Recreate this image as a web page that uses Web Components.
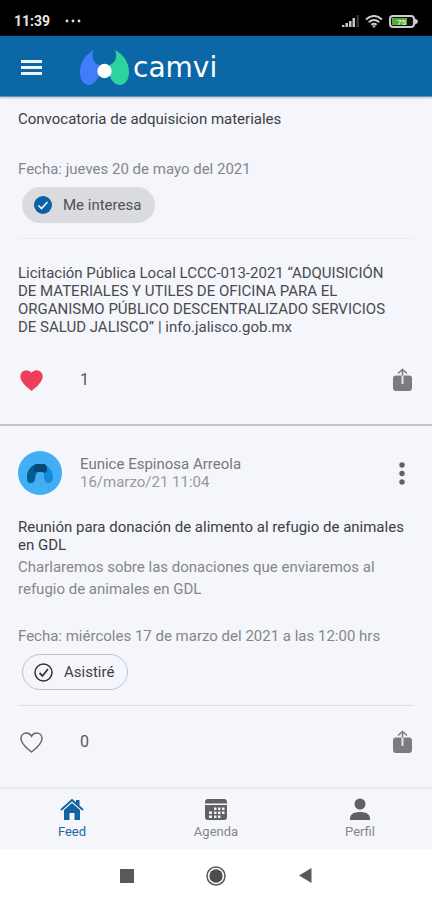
<!DOCTYPE html>
<html lang="es">
<head>
<meta charset="utf-8">
<meta name="viewport" content="width=device-width, initial-scale=1">
<title>camvi</title>
<style>
html{height:100%}
body{margin:0;min-height:100%;display:flex;flex-direction:column;background:#f4f6fb;font-family:Roboto,"Liberation Sans",sans-serif;font-size:15px;line-height:18px;color:#4a4b4f}
camvi-app{flex:1}
</style>
</head>
<body>
<camvi-app></camvi-app>
<script>
const define = (name, html) => {
  const template = document.createElement('template');
  template.innerHTML = '<style>*{box-sizing:border-box}button{font:inherit;color:inherit;background:none;border:0;padding:0;margin:0;display:flex;align-items:center;cursor:pointer}svg{display:block;flex:none}p,h1,h2{margin:0;font:inherit}</style>' + html;
  customElements.define(name, class extends HTMLElement {
    constructor() {
      super();
      this.attachShadow({mode: 'open'}).append(template.content.cloneNode(true));
    }
  });
};

define('status-bar', `
<style>
:host{box-sizing:border-box;display:flex;justify-content:space-between;align-items:center;height:36px;padding:6px 14px 0;background:#000;color:#e6e6e6;font-size:14px;font-weight:700}
div{display:flex;align-items:center;gap:6px}
.left{gap:15px}
</style>
<div class="left"><span>11:39</span>
<svg width="16" height="4" fill="#ddd"><circle cx="2" cy="2" r="1.4"/><circle cx="8" cy="2" r="1.4"/><circle cx="14" cy="2" r="1.4"/></svg></div>
<div>
<svg width="17" height="12" fill="#c8c8c8"><path d="M0 10h2.500v2H0zM3.500 8H6v4H3.500zM7 6h2.500v6H7zM10.500 3H13v9h-2.500z"/><path d="M14.500 0H17v12h-2.500z" fill="#333"/></svg>
<svg width="18" height="13" viewBox="0 0 18 13" fill="none" stroke="#ccc" stroke-width="2"><path d="M1 4.500Q9-2.500 17 4.500M3.700 7.200Q9 2.800 14.300 7.200M6.300 9.800Q9 7.600 11.700 9.800"/><path d="M7 10.500h4L9 13z" fill="#ccc" stroke="none"/></svg>
<svg width="29" height="13" viewBox="0 0 29 13"><rect x="1" y="1" width="24" height="11" rx="3" fill="#111" stroke="#ccc" stroke-width="2"/><path d="M26 3.500q3 1 3 3t-3 3z" fill="#ccc"/><path d="M3 3h15v7H3z" fill="#4fae2c"/><text x="8" y="9.500" font-size="8" font-family="Roboto" font-weight="700" fill="#d8f0cc">75</text></svg>
</div>`);

define('app-header', `
<style>
:host{box-sizing:border-box;display:flex;align-items:center;gap:38px;min-height:61px;padding:3px 21px 0;background:#0b67a5;border-bottom:1px solid #5f96bf;box-shadow:0 1px 2px #b9bcc6;color:#fff}
h1{display:flex;align-items:center;gap:4px;font:28px/36px "DejaVu Sans",sans-serif}
</style>
<button aria-label="Menú"><svg width="21" height="15" fill="#eef5fa"><path d="M0 0h21v3H0zM0 6h21v3H0zM0 12h21v3H0z"/></svg></button>
<h1><svg width="49" height="37" viewBox="0 0 49 37"><path d="M14 1C6 5 0 13 0 23C0 31 4 36 9 36C14 36 17 30 19 27L22 17C14 15 10 8 14 1Z" fill="#3f7dfb"/><path d="M35 1C43 5 49 13 49 23C49 31 45 36 40 36C34 36 31 30 29 26L27 17C35 15 38 9 35 1Z" fill="#2dd39d"/><circle cx="24.500" cy="22" r="7.200" fill="#fff"/></svg><span>camvi</span></h1>`);

define('interest-chip', `
<style>
:host{display:flex;padding:0 4px}
button{height:36px;padding:0 13px 0 11px;gap:11px;border:1px solid #c3c4c9;border-radius:18px;color:#3f4043}
:host([active]) button{background:#dadbde;border-color:#dadbde;color:#505155}
.on,:host([active]) .off{display:none}
:host([active]) .on{display:block}
</style>
<button><svg class="on" width="18" height="18" viewBox="0 0 18 18"><circle cx="9" cy="9" r="9" fill="#0b62a3"/><path d="M4.500 9.500l3 3 6-6.500" fill="none" stroke="#eef3f8" stroke-width="1.700"/></svg>
<svg class="off" width="19" height="19" viewBox="0 0 19 19" fill="none" stroke="#333438"><circle cx="9.500" cy="9.500" r="8.500" stroke-width="1.500"/><path d="M5.500 10l3 3L14 6" stroke-width="1.800"/></svg>
<span><slot></slot></span></button>`);

define('post-actions', `
<style>
:host{display:flex;align-items:center;color:#55565a;height:40px;padding:0 2px;font-size:16px}
.like{gap:37px}
.share{margin-left:auto}
.heart{fill:none;stroke:#66676b;stroke-width:1.5}
:host([liked]) .heart{fill:#ef3e5b;stroke:#ef3e5b}
</style>
<button class="like" aria-label="Me gusta"><svg class="heart" width="23" height="21" viewBox="0 0 23 21"><path d="M11.500 20C8 17 1 12.500 1 6.500C1 3 3.500 1 6.300 1C8.700 1 10.500 2.200 11.500 4.200C12.500 2.200 14.300 1 16.700 1C19.500 1 22 3 22 6.500C22 12.500 15 17 11.500 20Z"/></svg><span><slot></slot></span></button>
<button class="share" aria-label="Compartir"><svg width="19" height="24" viewBox="0 0 19 24"><path d="M3 7.500h13a3 3 0 0 1 3 3V20a3 3 0 0 1-3 3H3a3 3 0 0 1-3-3V10.500a3 3 0 0 1 3-3z" fill="#7b7c80"/><path d="M9.500 7v9" stroke="#e5e6ea" stroke-width="2"/><path d="M9.500 7.500V1.500M5 5.500l4.500-4 4.500 4" fill="none" stroke="#7b7c80" stroke-width="1.600"/></svg></button>`);

define('post-author', `
<style>
:host{display:flex;align-items:center;gap:18px;height:44px;color:#98999d}
h2{color:#77787c}
button{margin-left:auto;padding:0 9px}
</style>
<svg width="44" height="44" viewBox="0 0 44 44"><circle cx="22" cy="22" r="22" fill="#40aff3"/><path d="M22 13C29 13 35 19 35 26C35 30 33 32 30 32C27 32 27 29 26 27V23C25 20 19 20 18 23L17 27C17 29 16 32 13 32C10 32 9 30 9 26C9 19 15 13 22 13Z" fill="#128bdb"/><path d="M20 13H26Q29 14 29 19Q29 22 26 22C24 20 19 20 18 23L17 27C17 29 16 32 13 32C10 32 9 30 9 26C9 19 14 13 20 13Z" fill="#075a90"/><path d="M18 13H26Q29 14 29 18Q28 21 25 21H19Q16 21 16 18Q16 14 18 13Z" fill="#064875"/></svg>
<div><h2><slot name="name"></slot></h2><p><slot></slot></p></div>
<button aria-label="Opciones"><svg width="6" height="23" fill="#606165"><circle cx="3" cy="3" r="2.700"/><circle cx="3" cy="11.500" r="2.700"/><circle cx="3" cy="20" r="2.700"/></svg></button>`);

define('feed-post', `
<style>
:host{display:block;padding:0 18px}
.title{color:#3d3e42}
.body,.date{line-height:22px;color:#85868a}
.body{padding-top:2px}
.date{padding-bottom:7px}
.rule{border:0;border-top:1px solid #dcdfe4;margin:15px 0 0}
:host([quiet]) .rule{border-color:#e8ebef}
</style>
<slot name="author"></slot>
<p class="title"><slot name="title"></slot></p>
<p class="body"><slot name="body"></slot></p>
<p class="date"><slot name="date"></slot></p>
<slot name="chip"></slot>
<hr class="rule">
<slot></slot>`);

define('tab-bar', `
<style>
:host{display:block;border-top:2px solid #e9ebef;background:#f5f6fa}
nav{display:grid;grid-template-columns:repeat(3,1fr)}
a{display:flex;flex-direction:column;align-items:center;padding:9px 0 8px;gap:2px;font-size:13px;line-height:18px;color:#85868a;text-decoration:none}
a[aria-current]{color:#1969a8}
</style>
<nav>
<a href="#feed" aria-current="page"><svg width="24" height="23" viewBox="0 0 24 23"><path d="M16 2h3.500v6L16 5z" fill="#1263a2"/><path d="M1 12L12 2l11 10" fill="none" stroke="#1263a2" stroke-width="2"/><path d="M4 12l8-7 8 7v10h-5.500v-7h-5v7H4z" fill="#1263a2"/></svg>Feed</a>
<a href="#agenda"><svg width="24" height="23" viewBox="0 0 24 23"><path d="M4 1h16a3 3 0 0 1 3 3v1.500H1V4a3 3 0 0 1 3-3zM1 7h22v12a3 3 0 0 1-3 3H4a3 3 0 0 1-3-3z" fill="#606165"/><g fill="#f0f1f4"><path d="M10 9.500h2.500V12H10zM14 9.500h2.500V12H14zM18 9.500h2.500V12H18zM5 13.500h3V16H5zM10 13.500h2.500V16H10zM14 13.500h2.500V16H14zM18 13.500h2.500V16H18zM5 17.500h3V20H5zM10 17.500h2.500V20H10zM14 17.500h2.500V20H14z"/></g></svg>Agenda</a>
<a href="#perfil"><svg width="20" height="23" viewBox="0 0 20 23" fill="#606165"><circle cx="10" cy="6" r="5.500"/><path d="M0 22v-1.500C0 16 4.500 14 10 14s10 2 10 6.500V22z"/></svg>Perfil</a>
</nav>`);

define('system-nav', `
<style>
:host{box-sizing:border-box;display:flex;justify-content:center;align-items:center;gap:72px;height:51px;padding:2px 0 0;background:#fff}
</style>
<button aria-label="Recientes"><svg width="14" height="14"><path d="M0 0h14v14H0z" fill="#58595b"/></svg></button>
<button aria-label="Inicio"><svg width="20" height="20"><circle cx="10" cy="10" r="9" fill="none" stroke="#58595b" stroke-width="1.500"/><circle cx="10" cy="10" r="6.700" fill="#4c4d4f"/></svg></button>
<button aria-label="Atrás"><svg width="14" height="15"><path d="M13.500 0v15L1 7.500z" fill="#58595b"/></svg></button>`);

define('camvi-app', `
<style>
:host{display:flex;flex-direction:column}
main{flex:1;padding:13px 0 24px}
app-header{position:relative}
.empty{display:block;height:28px}
.link{padding:25px 16px 24px 0}
.split{border:0;border-top:2px solid #c3c5ca;margin:24px 0 25px}
.author{margin-bottom:23px}
.text{display:block;padding-bottom:25px}
.late{margin-top:16px}
</style>
<status-bar></status-bar>
<app-header></app-header>
<main>
<feed-post quiet>
<span slot="title">Convocatoria de adquisicion materiales</span>
<span slot="body" class="empty"></span>
<span slot="date">Fecha: jueves 20 de mayo del 2021</span>
<interest-chip slot="chip" active>Me interesa</interest-chip>
<p class="link">Licitación Pública Local LCCC-013-2021 “ADQUISICIÓN DE MATERIALES Y UTILES DE OFICINA PARA EL ORGANISMO PÚBLICO DESCENTRALIZADO SERVICIOS DE SALUD JALISCO” | info.jalisco.gob.mx</p>
<post-actions liked>1</post-actions>
</feed-post>
<hr class="split">
<feed-post>
<post-author slot="author" class="author"><span slot="name">Eunice Espinosa Arreola</span>16/marzo/21 11:04</post-author>
<span slot="title">Reunión para donación de alimento al refugio de animales en GDL</span>
<span slot="body" class="text">Charlaremos sobre las donaciones que enviaremos al refugio de animales en GDL</span>
<span slot="date">Fecha: miércoles 17 de marzo del 2021 a las 12:00 hrs</span>
<interest-chip slot="chip">Asistiré</interest-chip>
<post-actions class="late">0</post-actions>
</feed-post>
</main>
<tab-bar></tab-bar>
<system-nav></system-nav>`);
</script>
</body>
</html>
